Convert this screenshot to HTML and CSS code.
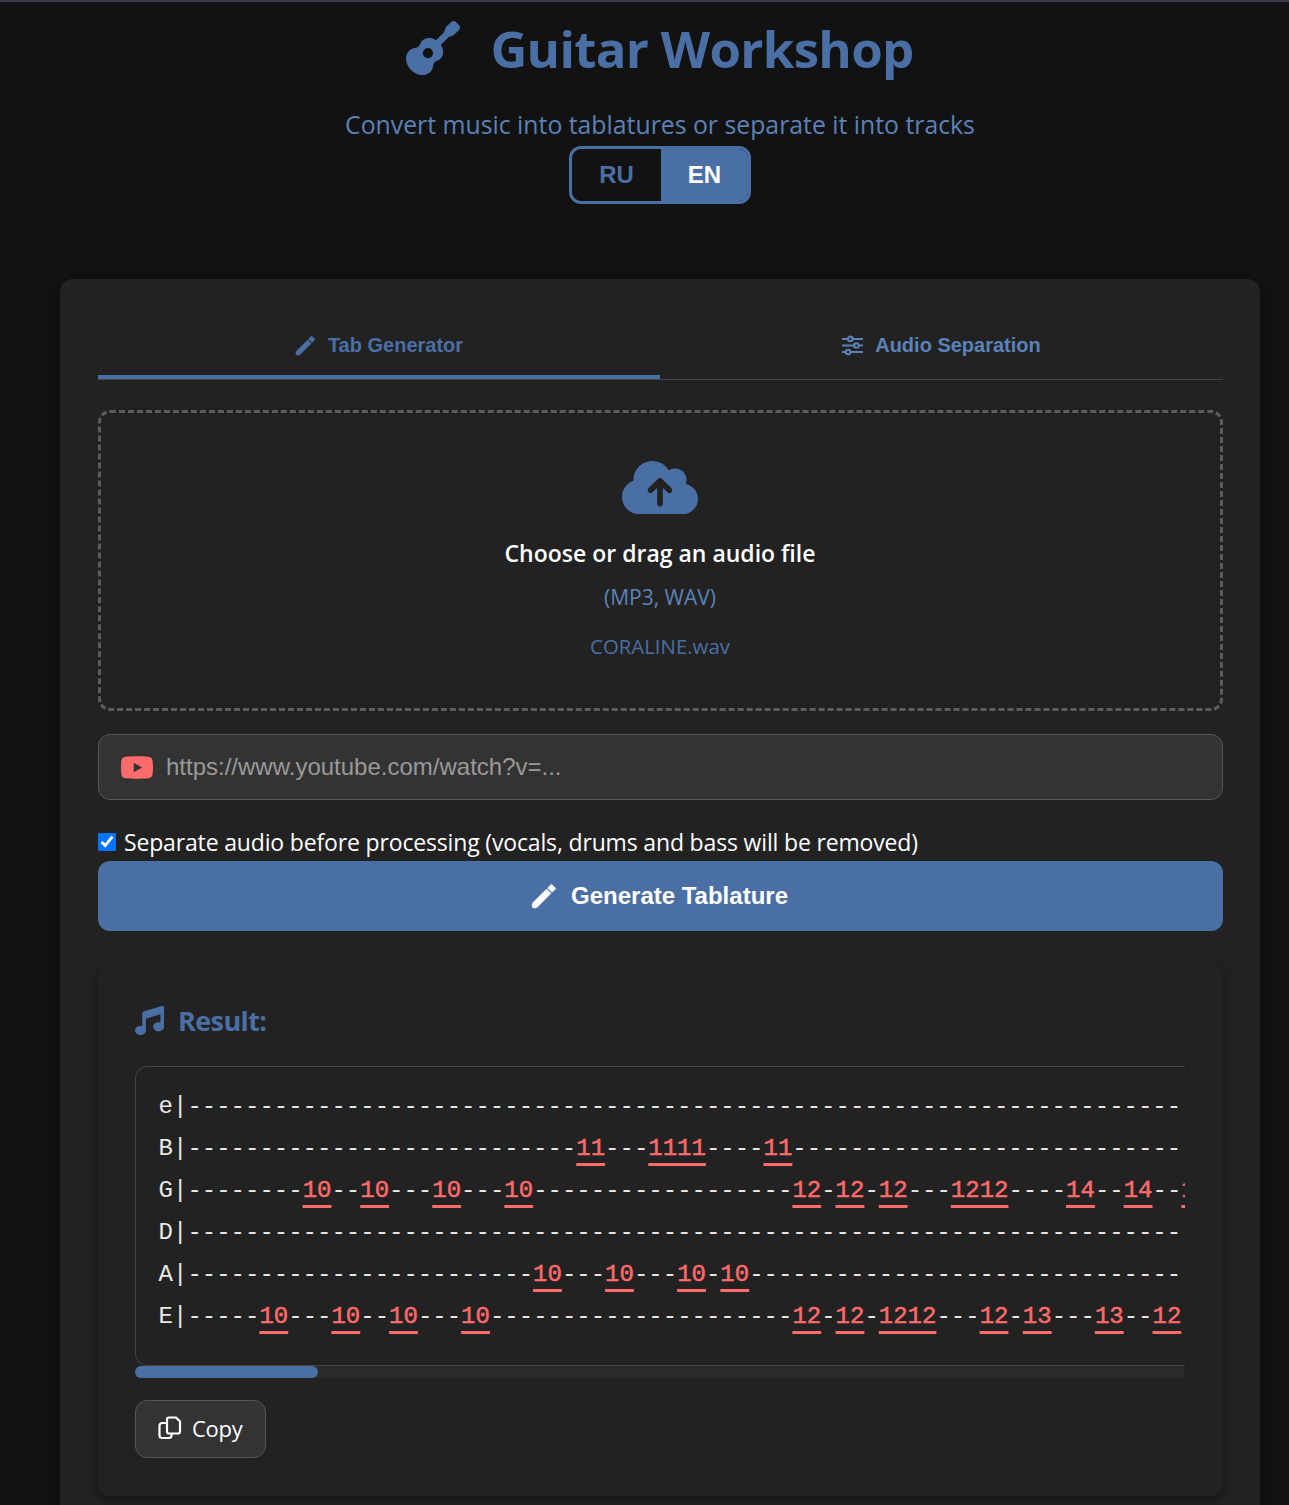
FILE: index.html
```html
<!DOCTYPE html>
<html lang="en">
<head>
  <meta charset="UTF-8" />
  <meta name="viewport" content="width=device-width, initial-scale=1.0"/>
  <title>Guitar Workshop</title>
  <link rel="stylesheet" href="styles.css">
</head>
<body>
  <div class="topline"></div>
  <div class="container">
    <header class="header">
      <h1 class="title">
        <svg class="title-icon" viewBox="0 0 512 512"><path d="M502.63 39L473 9.37a32 32 0 0 0-45.26 0L381.46 55.7a35.14 35.14 0 0 0-8.53 13.79L360.77 106l-76.26 76.26c-12.16-8.76-25.5-15.74-40.1-19.14-33.45-7.78-67-.88-89.88 22a82.45 82.45 0 0 0-20.24 33.47c-6 18.56-23.21 32.69-42.15 34.46-23.7 2.27-45.73 11.45-62.61 28.44C-16.11 327-7.9 409 47.58 464.45S185 528 230.56 482.52c17-16.88 26.16-38.9 28.45-62.71 1.76-18.85 15.89-36.13 34.43-42.14a82.6 82.6 0 0 0 33.48-20.25c22.87-22.88 29.74-56.36 21.97-89.75-3.39-14.64-10.37-28-19.16-40.2L406 151.23l36.48-12.16a35.14 35.14 0 0 0 13.79-8.53l46.33-46.32a32 32 0 0 0 .03-45.22zM208 352a48 48 0 1 1 48-48 48 48 0 0 1-48 48z"/></svg>
        Guitar Workshop
      </h1>
      <p class="subtitle">Convert music into tablatures or separate it into tracks</p>
      <div class="lang-switch">
        <button type="button" class="lang-btn">RU</button>
        <button type="button" class="lang-btn active">EN</button>
      </div>
    </header>

    <main class="card">
      <!-- Tabs -->
      <div class="tabs">
        <button type="button" class="tab active">
          <svg class="tab-icon" viewBox="0 0 24 24"><path class="pen-shape" d="M1.500 18.500L14.400 5.600L18.400 9.600L5.500 22.500Q3.500 23.500 1.500 22.500Q.5 20.500 1.500 18.500ZM15.400 4.600L18.900 1.100L22.900 5.100L19.400 8.600Z"/></svg>
          Tab Generator
        </button>
        <button type="button" class="tab">
          <svg class="tab-icon" viewBox="0 0 24 24"><g class="slider-lines"><path d="M0 4.500h24M0 12h24M0 19.500h24"/><circle cx="9.500" cy="4.500" r="2.600"/><circle cx="16.500" cy="12" r="2.600"/><circle cx="7" cy="19.500" r="2.600"/></g></svg>
          Audio Separation
        </button>
      </div>

      <!-- Upload -->
      <label class="dropzone">
        <svg class="cloud-icon" viewBox="0 0 640 512"><path d="M144 480C64.5 480 0 415.5 0 336c0-62.8 40.2-116.2 96.2-135.9c-.1-2.7-.2-5.4-.2-8.1c0-88.4 71.6-160 160-160c59.3 0 111 32.2 138.7 80.2C409.9 102 428.3 96 448 96c53 0 96 43 96 96c0 12.2-2.3 23.8-6.4 34.6C596 238.4 640 290.1 640 352c0 70.7-57.3 128-128 128H144zm79-217c-9.4 9.4-9.4 24.6 0 33.9s24.6 9.4 33.9 0l39-39V392c0 13.3 10.7 24 24 24s24-10.7 24-24V257.9l39 39c9.4 9.4 24.6 9.4 33.9 0s9.4-24.6 0-33.9l-80-80c-9.4-9.4-24.6-9.4-33.9 0l-80 80z"/></svg>
        <span class="drop-title">Choose or drag an audio file</span>
        <span class="drop-formats">(MP3, WAV)</span>
        <span class="drop-file">CORALINE.wav</span>
      </label>

      <div class="url-box">
        <svg class="yt-icon" viewBox="15 64 546 384"><path d="M549.655 124.083c-6.281-23.65-24.787-42.276-48.284-48.597C458.781 64 288 64 288 64S117.22 64 74.629 75.486c-23.497 6.322-42.003 24.947-48.284 48.597-11.412 42.867-11.412 132.305-11.412 132.305s0 89.438 11.412 132.305c6.281 23.65 24.787 41.5 48.284 47.821C117.22 448 288 448 288 448s170.78 0 213.371-11.486c23.497-6.321 42.003-24.171 48.284-47.821 11.412-42.867 11.412-132.305 11.412-132.305s0-89.438-11.412-132.305zm-317.51 213.508V175.185l142.739 81.205-142.739 81.201z"/></svg>
        <input class="url-input" type="text" placeholder="https://www.youtube.com/watch?v=..."/>
      </div>

      <label class="check-row">
        <input class="check" type="checkbox" checked/>
        Separate audio before processing (vocals, drums and bass will be removed)
      </label>

      <button type="button" class="generate">
        <svg class="gen-icon" viewBox="0 0 24 24"><path class="pen-shape" d="M1.500 18.500L14.400 5.600L18.400 9.600L5.500 22.500Q3.500 23.500 1.500 22.500Q.5 20.500 1.500 18.500ZM15.400 4.600L18.900 1.100L22.900 5.100L19.400 8.600Z"/></svg>
        Generate Tablature
      </button>

      <!-- Result -->
      <section class="result">
        <h3 class="result-title">
          <svg class="music-icon" viewBox="0 0 512 512"><path d="M499.1 6.3c8.1 6 12.9 15.6 12.9 25.7v72V368c0 44.2-43 80-96 80s-96-35.8-96-80s43-80 96-80c11.2 0 22 1.6 32 4.6V147L192 223.8V432c0 44.2-43 80-96 80s-96-35.8-96-80s43-80 96-80c11.2 0 22 1.6 32 4.6V200 128c0-14.1 9.3-26.6 22.8-30.7l320-96c9.7-2.9 20.2-1.1 28.3 5z"/></svg>
          Result:
        </h3>
        <div class="tab-scroll">
<pre class="tab-text">e|------------------------------------------------------------------------------------------
B|---------------------------<b>11</b>---<b>1111</b>----<b>11</b>--------------------------------------------------
G|--------<b>10</b>--<b>10</b>---<b>10</b>---<b>10</b>------------------<b>12</b>-<b>12</b>-<b>12</b>---<b>1212</b>----<b>14</b>--<b>14</b>--<b>12</b>--------------------
D|------------------------------------------------------------------------------------------
A|------------------------<b>10</b>---<b>10</b>---<b>10</b>-<b>10</b>-------------------------------------------------
E|-----<b>10</b>---<b>10</b>--<b>10</b>---<b>10</b>---------------------<b>12</b>-<b>12</b>-<b>1212</b>---<b>12</b>-<b>13</b>---<b>13</b>--<b>12</b>--------------------</pre>
        </div>
        <div class="scroll-track"><div class="scroll-thumb"></div></div>
        <button type="button" class="copy">
          <svg class="copy-icon" viewBox="0 0 24 24"><g class="copy-lines"><path d="M9 3.500a2 2 0 0 1 2-2h7l4 4v10a2 2 0 0 1-2 2H11a2 2 0 0 1-2-2z"/><path d="M9 7H4a2.500 2.500 0 0 0-2.500 2.500v10A2.500 2.500 0 0 0 4 22h7a2.500 2.500 0 0 0 2.500-2.500V17.500"/></g></svg>
          Copy
        </button>
      </section>
    </main>
  </div>
</body>
</html>
```

FILE: styles.css
```css
* {
  box-sizing: border-box;
}

html, body {
  height: 100%;
  overflow: hidden;
}

body {
  margin: 0;
  background-color: #121212;
  color: #fff;
  font-family: "Open Sans", "Noto Sans", sans-serif;
}

svg {
  fill: currentColor;
  flex: none;
}

.topline {
  height: 2px;
  background-color: #3c3a46;
}

.container {
  width: 1200px;
  margin-left: 60px;
}

/* Header */
.header {
  display: flex;
  flex-direction: column;
  align-items: center;
  height: 277px;
}

.title {
  display: flex;
  align-items: center;
  gap: 30px;
  margin: 12px 0 0;
  font-size: 51px;
  line-height: 68px;
  font-weight: 700;
  letter-spacing: -0.7px;
  color: #4a6fa5;
}

.title-icon {
  width: 54px;
  height: 54px;
}

.subtitle {
  margin: 26px 0 0;
  font-size: 24.8px;
  line-height: 32px;
  color: #5b82b8;
}

.lang-switch {
  display: grid;
  grid-template-columns: 89px 87px;
  width: 182px;
  height: 58px;
  margin-top: 6px;
  border: 3px solid #4a6fa5;
  border-radius: 12px;
  overflow: hidden;
}

.lang-btn {
  border: none;
  background: transparent;
  color: #4a6fa5;
  font-family: "Liberation Sans", Arial, sans-serif;
  font-size: 24px;
  font-weight: 700;
  cursor: pointer;
}

.lang-btn.active {
  background-color: #4a6fa5;
  color: #fff;
}

/* Main card */
.card {
  padding: 32px 37px 38px 38px;
  background-color: #222;
  border-radius: 12px;
  box-shadow: 0 4px 20px rgba(0, 0, 0, 0.3);
}

.tabs {
  display: grid;
  grid-template-columns: 562px 563px;
  height: 69px;
  border-bottom: 1px solid #444;
}

.tab {
  display: flex;
  align-items: center;
  justify-content: center;
  gap: 12px;
  height: 68px;
  padding: 4px 0 0;
  border: none;
  border-bottom: 4px solid transparent;
  background: transparent;
  color: #5b82b8;
  font-family: "Liberation Sans", Arial, sans-serif;
  font-size: 20px;
  font-weight: 700;
}

.tab.active {
  border-bottom-color: #4a6fa5;
  color: #4a6fa5;
}

.tab-icon {
  width: 21px;
  height: 21px;
}

.pen-shape {
  stroke: currentColor;
  stroke-width: 0.6;
  stroke-linejoin: round;
}

.slider-lines {
  fill: #222;
  stroke: currentColor;
  stroke-width: 2.4;
}

/* Upload */
.dropzone {
  display: flex;
  flex-direction: column;
  align-items: center;
  height: 301px;
  margin-top: 30px;
  padding: 44px 1px 0 0;
  border: 3px dashed #5c5c5c;
  border-radius: 12px;
}

.cloud-icon {
  width: 76px;
  height: 61px;
  color: #4a6fa5;
}

.drop-title {
  margin-top: 20px;
  font-size: 23px;
  line-height: 30px;
  font-weight: 600;
}

.drop-formats {
  margin-top: 14px;
  font-size: 21px;
  line-height: 30px;
  color: #5b82b8;
}

.drop-file {
  margin-top: 19px;
  font-size: 20.4px;
  line-height: 30px;
  color: #4a6fa5;
}

.url-box {
  display: flex;
  align-items: center;
  gap: 11px;
  height: 66px;
  margin-top: 23px;
  padding: 0 22px;
  background-color: #333;
  border: 1px solid #555;
  border-radius: 12px;
}

.yt-icon {
  width: 32px;
  height: 23px;
  color: #ff6b6b;
}

.url-input {
  flex: 1;
  border: none;
  outline: none;
  background: transparent;
  color: #fff;
  font-family: "Liberation Sans", Arial, sans-serif;
  font-size: 24px;
}

.url-input::placeholder {
  color: #999;
}

.check-row {
  display: flex;
  align-items: center;
  gap: 8px;
  height: 28px;
  margin-top: 28px;
  font-size: 23px;
  letter-spacing: -0.16px;
}

.check {
  width: 18px;
  height: 18px;
  margin: 0;
}

.generate {
  display: flex;
  align-items: center;
  justify-content: center;
  gap: 14px;
  width: 100%;
  height: 70px;
  margin-top: 5px;
  padding: 0 2px 0 0;
  border: none;
  border-radius: 12px;
  background-color: #4a6fa5;
  color: #fff;
  font-family: "Liberation Sans", Arial, sans-serif;
  font-size: 24px;
  font-weight: 700;
}

.gen-icon {
  width: 26px;
  height: 26px;
}

/* Result */
.result {
  margin-top: 34px;
  padding: 35px 38px 38px 37px;
  background-color: #222;
  border-radius: 12px;
  box-shadow: 0 4px 12px rgba(0, 0, 0, 0.4);
}

.result-title {
  display: flex;
  align-items: center;
  gap: 14px;
  height: 40px;
  margin: 0;
  font-size: 27px;
  font-weight: 700;
  letter-spacing: -0.6px;
  color: #4a6fa5;
}

.music-icon {
  width: 29px;
  height: 29px;
}

.tab-scroll {
  margin-top: 26px;
  overflow: hidden;
}

.scroll-track {
  height: 12px;
  background-color: #2a2a2a;
  border-radius: 6px;
}

.scroll-thumb {
  width: 183px;
  height: 12px;
  background-color: #4a6fa5;
  border-radius: 6px;
}

.tab-text {
  width: 6025px;
  height: 300px;
  margin: 0;
  padding: 19px 22.6px;
  border: 1px solid #444;
  border-radius: 12px;
  font-family: "Liberation Mono", "Courier New", monospace;
  font-size: 24px;
  line-height: 42px;
  color: #e8e8e8;
}

.tab-text b {
  font-weight: 400;
  color: #ff6b6b;
  -webkit-text-stroke: 0.5px #ff6b6b;
  text-decoration: underline;
  text-decoration-thickness: 3px;
  text-underline-offset: 8px;
  text-decoration-skip-ink: none;
}

.copy {
  display: flex;
  align-items: center;
  gap: 10px;
  height: 58px;
  margin-top: 22px;
  padding: 0 23px 3px 22px;
  background-color: #333;
  border: 1px solid #555;
  border-radius: 12px;
  color: #fff;
  font-family: "Open Sans", sans-serif;
  font-size: 22px;
  letter-spacing: -0.3px;
}

.copy-icon {
  width: 24px;
  height: 24px;
}

.copy-lines {
  fill: none;
  stroke: currentColor;
  stroke-width: 2.2;
}
```
